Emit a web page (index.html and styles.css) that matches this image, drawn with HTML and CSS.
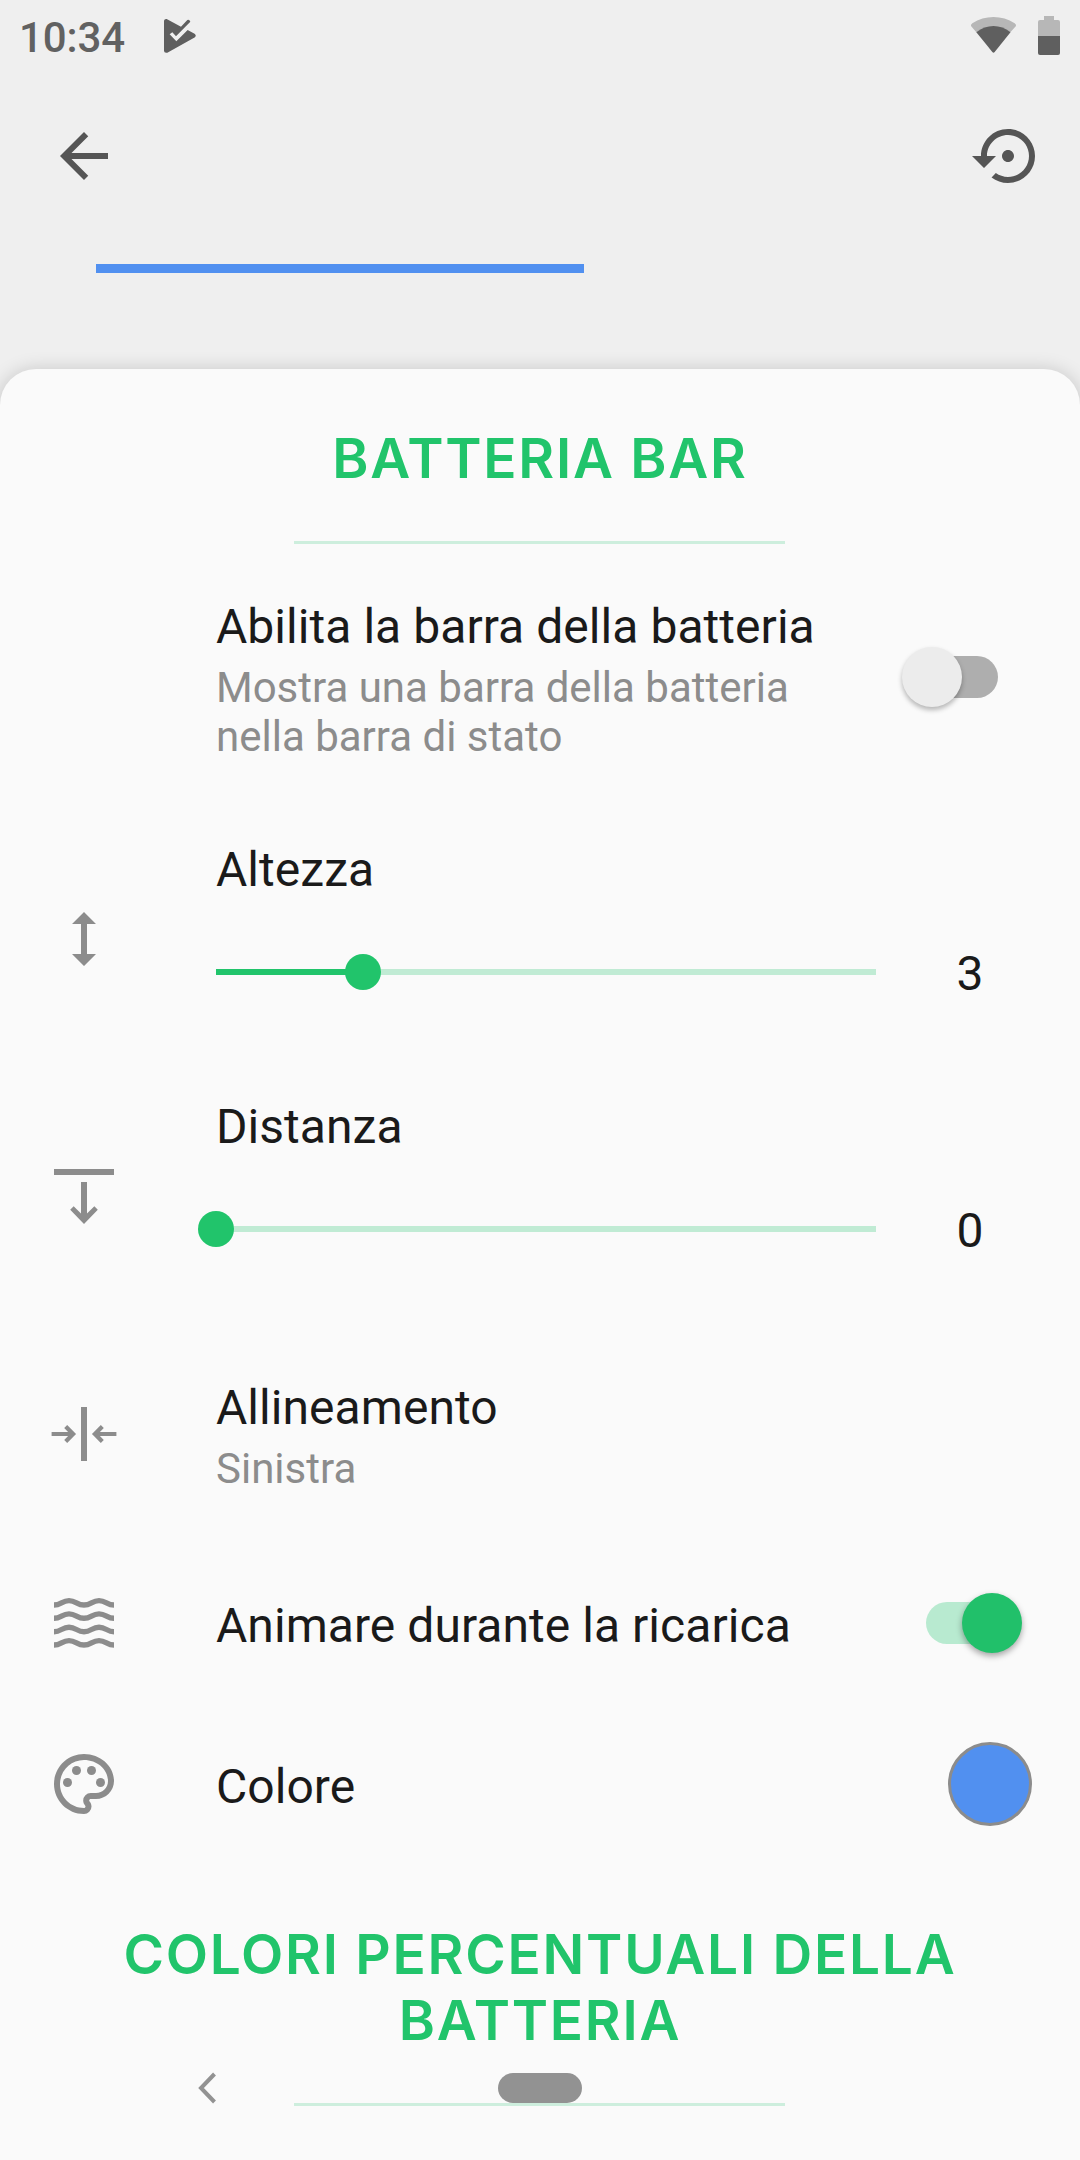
FILE: index.html
```html
<!DOCTYPE html>
<html lang="it">
<head>
    <meta charset="utf-8">
    <title>Batteria bar</title>
    <link rel="stylesheet" href="styles.css">
</head>
<body>
    <div class="screen">
        <div class="status-bar">
            <span class="clock">10:34</span>
            <svg class="play" viewBox="483 48 114 120" width="38" height="40">
                <path d="M492 62Q493 56 500 57L543 80L562 60Q568 57 571 65L528 109L517 97L509 103L529 124L563 90L585 102Q590 107 585 112L502 158Q492 160 492 152Z"/>
            </svg>
            <svg class="wifi" viewBox="207 42 147 120" width="49" height="40">
                <path class="faded" d="M213 78Q212 73 217 70Q246 51 280.500 51Q315 51 344 70Q349 73 348 78L331 97L280.500 110L229 97Z"/>
                <path d="M229 97Q253 78 280.500 78Q308 78 331.500 97L284 156Q280.500 160 277 156Z"/>
            </svg>
            <svg class="battery" viewBox="0 0 22 39" width="22" height="39">
                <path class="faded" d="M6 0h10v4h4q2 0 2 2v14H0V6q0-2 2-2h4z"/>
                <path d="M0 20h22v17q0 2-2 2H2q-2 0-2-2z"/>
            </svg>
        </div>

        <div class="toolbar">
            <svg viewBox="0 0 24 24" width="72" height="72">
                <path d="M20 11H7.830l5.590-5.590L12 4l-8 8 8 8 1.410-1.410L7.830 13H20v-2z"/>
            </svg>
            <svg viewBox="0 0 24 24" width="72" height="72">
                <path d="M14 12c0-1.100-.9-2-2-2s-2 .9-2 2 .9 2 2 2 2-.9 2-2zm-2-9c-4.970 0-9 4.030-9 9H0l4 4 4-4H5c0-3.870 3.130-7 7-7s7 3.130 7 7-3.130 7-7 7c-1.510 0-2.910-.49-4.060-1.300l-1.420 1.440C8.040 20.300 9.940 21 12 21c4.970 0 9-4.030 9-9s-4.030-9-9-9z"/>
            </svg>
        </div>

        <div class="preview">
            <div class="preview-bar"></div>
        </div>

        <div class="sheet">
            <h2 class="section-title">BATTERIA BAR</h2>
            <div class="divider"></div>

            <div class="row row-enable">
                <div class="icon"></div>
                <div class="text">
                    <p class="title">Abilita la barra della batteria</p>
                    <p class="summary">Mostra una barra della batteria nella barra di stato</p>
                </div>
                <div class="switch off"></div>
            </div>

            <div class="row row-height">
                <div class="icon">
                    <svg viewBox="0 0 24 24" width="72" height="72">
                        <path d="M12 3l4 4h-3v10h3l-4 4-4-4h3V7H8z"/>
                    </svg>
                </div>
                <div class="seek">
                    <p class="title">Altezza</p>
                    <div class="seek-line">
                        <div class="slider">
                            <div class="fill" style="width: 147px;"></div>
                            <div class="thumb"></div>
                        </div>
                        <span class="value">3</span>
                    </div>
                </div>
            </div>

            <div class="row row-distance">
                <div class="icon">
                    <svg viewBox="0 0 24 24" width="72" height="72">
                        <path d="M2 3h20v2H2zM11 7.330h2v10.470l2.450-2.350 1.150 1.150L12 21.300l-4.600-4.700 1.150-1.150L11 17.800z"/>
                    </svg>
                </div>
                <div class="seek">
                    <p class="title">Distanza</p>
                    <div class="seek-line">
                        <div class="slider">
                            <div class="fill" style="width: 0px;"></div>
                            <div class="thumb"></div>
                        </div>
                        <span class="value">0</span>
                    </div>
                </div>
            </div>

            <div class="row row-align">
                <div class="icon">
                    <svg viewBox="0 0 24 24" width="72" height="72">
                        <path d="M11 3h2v18h-2zM1.200 11.300h5.500l-1.300-1.300 1-1 2.950 3-2.950 3-1-1 1.300-1.300H1.200zM22.800 11.300h-5.500l1.300-1.300-1-1-2.950 3 2.950 3 1-1-1.300-1.300h5.500z"/>
                    </svg>
                </div>
                <div class="text">
                    <p class="title">Allineamento</p>
                    <p class="summary">Sinistra</p>
                </div>
            </div>

            <div class="row row-animate">
                <div class="icon">
                    <svg class="waves" viewBox="0 0 72 72" width="72" height="72">
                        <path d="M6 18c7 0 8-4.400 15-4.400s8 4.400 15 4.400 8-4.400 15-4.400 8 4.400 15 4.400"/>
                        <path d="M6 31.300c7 0 8-4.400 15-4.400s8 4.400 15 4.400 8-4.400 15-4.400 8 4.400 15 4.400"/>
                        <path d="M6 44.700c7 0 8-4.400 15-4.400s8 4.400 15 4.400 8-4.400 15-4.400 8 4.400 15 4.400"/>
                        <path d="M6 58c7 0 8-4.400 15-4.400s8 4.400 15 4.400 8-4.400 15-4.400 8 4.400 15 4.400"/>
                    </svg>
                </div>
                <div class="text">
                    <p class="title">Animare durante la ricarica</p>
                </div>
                <div class="switch on"></div>
            </div>

            <div class="row row-color">
                <div class="icon">
                    <svg viewBox="0 0 24 24" width="72" height="72">
                        <path d="M12 22C6.490 22 2 17.510 2 12S6.490 2 12 2s10 4.040 10 9c0 3.310-2.690 6-6 6h-1.770c-.28 0-.5.22-.5.5 0 .12.05.23.13.33.41.47.64 1.060.64 1.670A2.500 2.500 0 0 1 12 22zm0-18c-4.410 0-8 3.590-8 8s3.590 8 8 8c.28 0 .5-.22.5-.5a.54.54 0 0 0-.14-.35c-.41-.46-.63-1.050-.63-1.650a2.500 2.500 0 0 1 2.500-2.500H16c2.210 0 4-1.790 4-4 0-3.860-3.590-7-8-7z"/>
                        <circle cx="6.500" cy="11.500" r="1.500"/>
                        <circle cx="9.500" cy="7.500" r="1.500"/>
                        <circle cx="14.500" cy="7.500" r="1.500"/>
                        <circle cx="17.500" cy="11.500" r="1.500"/>
                    </svg>
                </div>
                <div class="text">
                    <p class="title">Colore</p>
                </div>
                <div class="swatch"></div>
            </div>

            <h2 class="section-title last">COLORI PERCENTUALI DELLA BATTERIA</h2>
            <div class="divider"></div>
        </div>

        <div class="nav-bar">
            <svg class="nav-back" viewBox="0 0 20 32" width="20" height="32">
                <path d="M17.500 2L4 16l13.500 14"/>
            </svg>
            <div class="nav-home"></div>
        </div>
    </div>
</body>
</html>
```
FILE: styles.css
```css
* {
    box-sizing: border-box;
}

body {
    margin: 0;
    background-color: #efefef;
    font-family: Roboto, "Noto Sans", sans-serif;
}

p, h2 {
    margin: 0;
}

svg {
    display: block;
    flex-shrink: 0;
}

.screen {
    position: relative;
    width: 1080px;
    height: 2160px;
    overflow: hidden;
    background-color: #efefef;
}

.status-bar {
    display: flex;
    align-items: flex-start;
    height: 72px;
    padding: 16px 20px 0 19px;
    fill: #5f5f5f;
}

.clock {
    width: 142px;
    padding-top: 1px;
    font-size: 42px;
    font-weight: 500;
    line-height: 42px;
    letter-spacing: -0.1px;
    color: #616161;
}

.wifi {
    margin-left: auto;
    margin-right: 20px;
    margin-top: -2px;
}

.faded {
    fill: #b7b7b7;
}

.toolbar {
    display: flex;
    justify-content: space-between;
    align-items: center;
    height: 168px;
    padding: 0 36px 0 48px;
    fill: #555555;
}

.preview {
    height: 129px;
    padding: 24px 96px 0;
}

.preview-bar {
    width: 488px;
    height: 9px;
    background-color: #5190f0;
}

.sheet {
    position: relative;
    height: 1791px;
    border-radius: 36px 36px 0 0;
    background-color: #fafafa;
    box-shadow: 0 2px 20px rgba(0, 0, 0, 0.2);
}

.section-title {
    padding: 56px 100px 50px;
    font-family: Inter, "Open Sans", sans-serif;
    font-size: 55px;
    font-weight: 600;
    line-height: 66px;
    letter-spacing: 1.75px;
    text-align: center;
    color: #21c46b;
}

.section-title.last {
    padding-top: 55px;
}

.divider {
    width: 491px;
    height: 3px;
    margin-left: 294px;
    background-color: #cdeedd;
}

.row {
    display: flex;
    align-items: center;
}

.row-enable { height: 266px; }
.row-height { height: 258px; }
.row-distance { height: 256px; }
.row-align { height: 220px; }
.row-animate { height: 158px; }
.row-color { height: 164px; }

.icon {
    flex-shrink: 0;
    width: 216px;
    padding-left: 48px;
    fill: #8c8c8c;
}

.waves {
    fill: none;
    stroke: #8c8c8c;
    stroke-width: 5.4;
}

.text {
    width: 640px;
    padding-top: 5px;
}

.title {
    font-size: 48px;
    line-height: 56px;
    letter-spacing: 0.05px;
    color: #1a1a1a;
}

.summary {
    margin-top: 8px;
    font-size: 42px;
    line-height: 49px;
    color: #8c8c8c;
}

.switch {
    position: relative;
    width: 120px;
    height: 60px;
    margin-left: auto;
    margin-right: 58px;
}

.switch::before {
    content: "";
    position: absolute;
    top: 9px;
    left: 24px;
    width: 84px;
    height: 42px;
    border-radius: 21px;
    background-color: #b8ead0;
}

.switch::after {
    content: "";
    position: absolute;
    top: 0;
    right: 0;
    width: 60px;
    height: 60px;
    border-radius: 50%;
    background-color: #21c06a;
    box-shadow: 0 3px 6px rgba(0, 0, 0, 0.35);
}

.switch.off::before {
    left: 12px;
    background-color: #aeaeae;
}

.switch.off::after {
    right: auto;
    left: 0;
    background-color: #ececec;
    box-shadow: 0 3px 5px rgba(0, 0, 0, 0.28);
}

.seek {
    width: 864px;
    height: 196px;
    padding-top: 1px;
}

.seek-line {
    display: flex;
    align-items: center;
    height: 56px;
    margin-top: 46px;
}

.slider {
    display: flex;
    align-items: center;
    width: 660px;
    height: 6px;
    background-color: #c0ebd4;
}

.fill {
    height: 6px;
    background-color: #21c46b;
}

.thumb {
    flex-shrink: 0;
    width: 36px;
    height: 36px;
    margin-left: -18px;
    border-radius: 50%;
    background-color: #21c46b;
}

.value {
    width: 188px;
    padding-top: 3px;
    font-size: 48px;
    line-height: 56px;
    text-align: center;
    color: #1a1a1a;
}

.swatch {
    width: 84px;
    height: 84px;
    margin-left: auto;
    margin-right: 48px;
    border: 3px solid #8c8c8c;
    border-radius: 50%;
    background-color: #5190f0;
}

/* system navigation, floats over the list */
.nav-bar {
    position: absolute;
    left: 0;
    bottom: 0;
    display: flex;
    align-items: center;
    width: 1080px;
    height: 144px;
    padding-left: 197px;
}

.nav-back {
    fill: none;
    stroke: #929292;
    stroke-width: 4;
}

.nav-home {
    width: 84px;
    height: 30px;
    margin-left: 281px;
    border-radius: 15px;
    background-color: #929292;
}
```
